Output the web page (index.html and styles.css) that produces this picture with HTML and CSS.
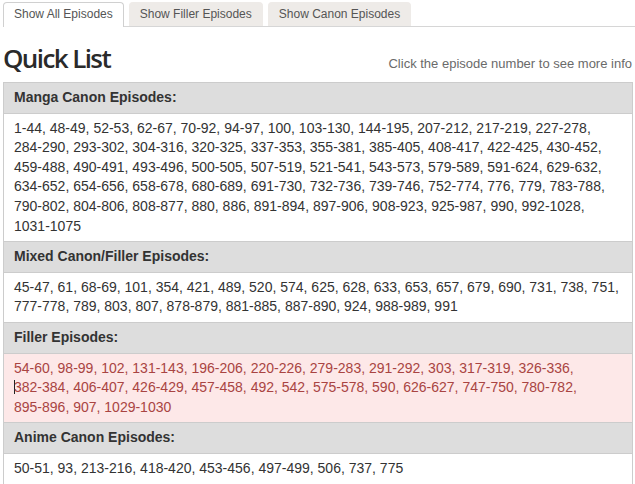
FILE: index.html
```html
<!DOCTYPE html>
<html lang="en">
<head>
<meta charset="utf-8">
<title>Quick List</title>
<link rel="stylesheet" href="styles.css">
</head>
<body>
<div class="page">
  <ul class="tabs">
    <li class="tab active">Show All Episodes</li>
    <li class="tab">Show Filler Episodes</li>
    <li class="tab">Show Canon Episodes</li>
  </ul>
  <div class="title-row">
    <h1 class="title">Quick List</h1>
    <span class="hint">Click the episode number to see more info</span>
  </div>
  <div class="list">
    <div class="sec-head">Manga Canon Episodes:</div>
    <div class="sec-body">1-44, 48-49, 52-53, 62-67, 70-92, 94-97, 100, 103-130, 144-195, 207-212, 217-219, 227-278, 284-290, 293-302, 304-316, 320-325, 337-353, 355-381, 385-405, 408-417, 422-425, 430-452, 459-488, 490-491, 493-496, 500-505, 507-519, 521-541, 543-573, 579-589, 591-624, 629-632, 634-652, 654-656, 658-678, 680-689, 691-730, 732-736, 739-746, 752-774, 776, 779, 783-788, 790-802, 804-806, 808-877, 880, 886, 891-894, 897-906, 908-923, 925-987, 990, 992-1028, 1031-1075</div>
    <div class="sec-head">Mixed Canon/Filler Episodes:</div>
    <div class="sec-body">45-47, 61, 68-69, 101, 354, 421, 489, 520, 574, 625, 628, 633, 653, 657, 679, 690, 731, 738, 751, 777-778, 789, 803, 807, 878-879, 881-885, 887-890, 924, 988-989, 991</div>
    <div class="sec-head">Filler Episodes:</div>
    <div class="sec-body filler">54-60, 98-99, 102, 131-143, 196-206, 220-226, 279-283, 291-292, 303, 317-319, 326-336, <span class="ep"><span class="caret"></span>382-384,</span> 406-407, 426-429, 457-458, 492, 542, 575-578, 590, 626-627, 747-750, <span class="ep">780-782,</span> <span class="ep">895-896,</span> 907, 1029-1030</div>
    <div class="sec-head">Anime Canon Episodes:</div>
    <div class="sec-body">50-51, 93, 213-216, 418-420, 453-456, 497-499, 506, 737, 775</div>
  </div>
</div>
</body>
</html>
```
FILE: styles.css
```css
html, body {
  margin: 0;
  padding: 0;
  background: #fff;
}
body {
  font-family: "Liberation Sans", Arial, sans-serif;
  color: #333;
}
.page {
  width: 630px;
  padding-left: 3px;
}
.tabs {
  list-style: none;
  margin: 0;
  padding: 2px 0 0 0;
  display: flex;
  gap: 5px;
  border-bottom: 1px solid #d6d6d6;
  width: 632px;
}
.tab {
  font-size: 12px;
  line-height: 14px;
  padding: 4px 10px 5px;
  color: #555;
  background: #eeebe8;
  border: 1px solid #eeebe8;
  border-bottom: none;
  border-radius: 4px 4px 0 0;
}
.tab.active {
  background: #fff;
  border-color: #d0d0d0;
  margin-bottom: -1px;
  padding-bottom: 6px;
}
.title-row {
  display: flex;
  justify-content: space-between;
  align-items: baseline;
  padding: 16px 0 9px;
}
.title {
  margin: 0;
  font-family: "Open Sans", "Noto Sans", sans-serif;
  font-weight: 600;
  font-size: 26px;
  line-height: 30px;
  letter-spacing: -1.6px;
  color: #2a2a2a;
}
.hint {
  font-size: 13px;
  color: #6a6a6a;
  margin-right: 1px;
}
.list {
  border: 1px solid #cccccc;
  border-bottom: none;
}
.sec-head {
  background: #dddddd;
  font-weight: bold;
  font-size: 14px;
  line-height: 1.4;
  padding: 5px 10px;
  border-bottom: 1px solid #cccccc;
  color: #333;
}
.sec-body {
  font-size: 14px;
  line-height: 1.4;
  padding: 5px 10px;
  border-bottom: 1px solid #cccccc;
  background: #fff;
  color: #333;
}
.sec-body.filler {
  background: #fde8e8;
  color: #a94442;
}
.ep {
  white-space: nowrap;
}
.caret {
  display: inline-block;
  width: 1px;
  height: 14px;
  background: #222;
  vertical-align: -2px;
  margin-right: -1px;
}
```
